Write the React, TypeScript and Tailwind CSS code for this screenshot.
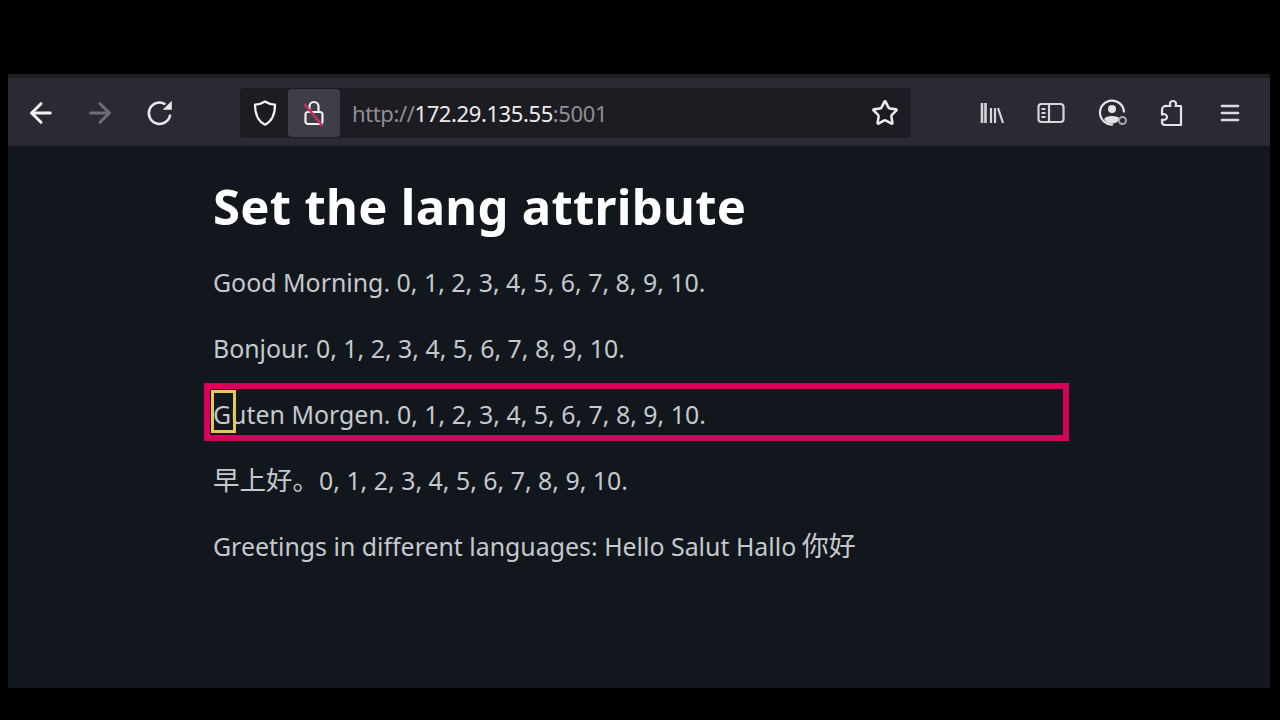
import { ArrowLeft, ArrowRight, Menu, Star } from "lucide-react";

const FONT = "[font-family:'Noto_Sans','Noto_Sans_CJK_SC',sans-serif]";

function Reload() {
  return (
    <svg width="30" height="30" viewBox="0 0 28 28" fill="none">
      <path d="M23.500 15.500A10 10 0 1 1 19 5.800" stroke="#e8e8ea" strokeWidth="2.400" />
      <path d="M25 2.500V11h-8.500z" fill="#e8e8ea" />
    </svg>
  );
}

function Shield() {
  return (
    <svg width="26" height="28" viewBox="0 0 26 28" fill="none" stroke="#f4f4f6" strokeWidth="2.2">
      <path d="M13 2.5c3 2 6 3 10 3.2 0 9-2 16-10 20-8-4-10-11-10-20 4-.2 7-1.200 10-3.200z" strokeLinejoin="round" />
    </svg>
  );
}

function BrokenLock() {
  return (
    <svg width="26" height="30" viewBox="0 0 26 30" fill="none">
      <path d="M8.500 13V8.500a4.500 4.500 0 0 1 9 0V13" stroke="#f0eff2" strokeWidth="2.200" />
      <rect x="4.500" y="14" width="17" height="12" rx="2.500" stroke="#f0eff2" strokeWidth="2.200" />
      <path d="M3.500 6 21.500 28" stroke="#c8305f" strokeWidth="2.600" />
    </svg>
  );
}

function Library() {
  return (
    <svg width="26" height="26" viewBox="0 0 26 26" fill="none" stroke="#d6d6da" strokeWidth="2.200">
      <path d="M3 3v20M6.500 3v20" strokeWidth="2.600" />
      <path d="M12 8v15M16 8v15M19 8l5 15" />
    </svg>
  );
}

function Sidebar() {
  return (
    <svg width="28" height="22" viewBox="0 0 28 22" fill="none" stroke="#d6d6da" strokeWidth="2.200">
      <rect x="1.500" y="2" width="25" height="18" rx="3" />
      <path d="M12 2v18" />
      <path d="M4.500 7h4M4.500 11h4M4.500 15h4" strokeWidth="1.800" />
    </svg>
  );
}

function Account() {
  return (
    <svg width="32" height="30" viewBox="0 0 32 30" fill="none">
      <path d="M27 14.500A12 12 0 1 0 16 26.500" stroke="#e4e4e8" strokeWidth="2.200" />
      <circle cx="15" cy="11" r="4" fill="#e4e4e8" />
      <path d="M7 21c2-4 14-4 16 0-2 3-5 4.500-8 4.500S9 24 7 21z" fill="#e4e4e8" />
      <circle cx="25.500" cy="22.500" r="3.500" fill="#2b2a33" stroke="#a9a9b0" strokeWidth="2" />
    </svg>
  );
}

function Puzzle() {
  return (
    <svg width="26" height="28" viewBox="0 0 26 28" fill="none" stroke="#e4e4e8" strokeWidth="2.200" strokeLinejoin="round">
      <path d="M9 7h3.500c-1-1.500-.8-5 2.500-5s3.500 3.500 2.500 5H23v19H7a3 3 0 0 1-3-3v-2.500c3 1 5-.5 5-2.500s-2-3.500-5-2.500V11a4 4 0 0 1 5-4z" />
    </svg>
  );
}

export default function App() {
  return (
    <div className={`flex h-[720px] w-[1280px] flex-col bg-black pt-[74px] pb-8 pl-2 pr-2.5 ${FONT}`}>
      <div className="flex h-[614px] flex-col">
        {/* Browser toolbar */}
        <div className="flex h-[72px] items-center border-t-4 border-[#1f1e25] bg-[#2b2a33] pt-[2px]">
          <div className="flex w-[232px] items-center pl-[17px]">
            <ArrowLeft size={32} strokeWidth={2.2} className="text-[#f2f2f4]" />
            <ArrowRight size={32} strokeWidth={2.2} className="ml-[27px] text-[#6f6e76]" />
            <div className="ml-[29px]"><Reload /></div>
          </div>
          <div className="flex h-[50px] w-[671px] items-center rounded bg-[#1d1c22] pl-3 pr-[12px]">
            <Shield />
            <div className="ml-[10px] flex h-[48px] w-[52px] items-center justify-center rounded bg-[#3f3e47]">
              <BrokenLock />
            </div>
            <div className="ml-[12px] flex-1 text-[22px] tracking-[-0.4px] text-[#8f8f95]">
              http://<span className="text-[#ececee]">172.29.135.55</span>:5001
            </div>
            <Star size={28} strokeWidth={2.2} className="text-[#ececee]" />
          </div>
          <div className="ml-[68px] flex items-center">
            <Library />
            <div className="ml-[32px]"><Sidebar /></div>
            <div className="ml-[32px]"><Account /></div>
            <div className="ml-[29px]"><Puzzle /></div>
            <Menu size={24} strokeWidth={2.6} className="ml-[34px] text-[#dcdce0]" />
          </div>
        </div>

        {/* Page */}
        <div className="flex-1 bg-[#12171d] pl-[205px] text-[24.9px] text-[#c4c9ce]">
          <h1 className="mt-[25px] text-[49px] leading-[70px] font-bold tracking-[0.3px] text-white">Set the lang attribute</h1>
          <p className="mt-[18px] h-[66px] leading-[46px]">Good Morning. 0, 1, 2, 3, 4, 5, 6, 7, 8, 9, 10.</p>
          <p className="h-[66px] leading-[46px]">Bonjour. 0, 1, 2, 3, 4, 5, 6, 7, 8, 9, 10.</p>
          <p className="relative h-[66px] leading-[46px]">
            Guten Morgen. 0, 1, 2, 3, 4, 5, 6, 7, 8, 9, 10.
            <span className="absolute -left-[9px] -top-[8px] h-[58px] w-[865px] border-[6px] border-[#d4005c]" />
            <span className="absolute -left-[2px] -top-px h-[43px] w-[25px] border-[3px] border-[#e3c94f]" />
          </p>
          <p className="h-[66px] leading-[46px]"><span className="text-[26.5px]">早上好。</span>0, 1, 2, 3, 4, 5, 6, 7, 8, 9, 10.</p>
          <p className="h-[66px] leading-[46px]">Greetings in different languages: Hello Salut Hallo <span className="-ml-px text-[27px]">你好</span></p>
        </div>
      </div>
    </div>
  );
}
